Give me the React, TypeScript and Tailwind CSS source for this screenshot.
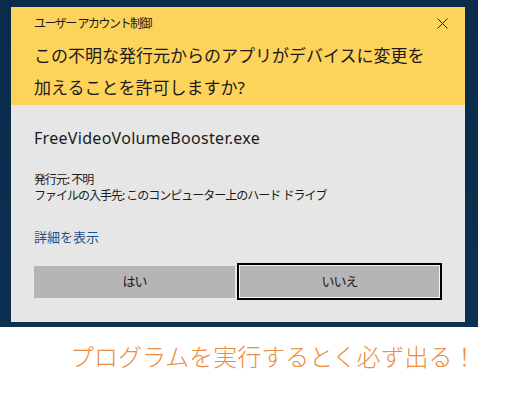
const jp = "font-['Noto_Sans','Noto_Sans_CJK_JP',sans-serif]";

function CloseIcon() {
  return (
    <svg width="11" height="11" viewBox="0 0 11 11" className="block">
      <path d="M0.5 0.5 L10.5 10.5 M10.5 0.5 L0.5 10.5" stroke="#222" strokeWidth="1" fill="none" />
    </svg>
  );
}

export default function App() {
  return (
    <div className={`w-[530px] h-[394px] bg-white overflow-hidden ${jp}`}>
      <div className="w-[478px] h-[327px] bg-gradient-to-b from-[#0a2b4a] to-[#0c3050] pt-[7px] pl-[11px]">
        <div className="w-[454px] h-[315px] flex flex-col bg-[#e6e6e6]">
          <div className="h-[98px] bg-[#fdd35c] px-[23px] pt-[9px] relative">
            <div className="text-[12px] leading-[16px] text-[#1b1b1b] tracking-[-1.5px] whitespace-nowrap">
              ユーザー アカウント制御
            </div>
            <div className="absolute right-[17px] top-[11px]">
              <CloseIcon />
            </div>
            <div className="mt-[8px] text-[17px] leading-[32px] text-[#1b1b1b] whitespace-nowrap">
              <div>この不明な発行元からのアプリがデバイスに変更を</div>
              <div>加えることを許可しますか?</div>
            </div>
          </div>

          <div className="px-[23px] pt-[23px] text-[#1b1b1b]">
            <div className="text-[16px] leading-[20px] tracking-[0.3px]">FreeVideoVolumeBooster.exe</div>
            <div className="mt-[24px] text-[12px] leading-[16px] tracking-[-1px] whitespace-nowrap">
              <div>発行元: 不明</div>
              <div>ファイルの入手先: このコンピューター上のハード ドライブ</div>
            </div>
            <div className="mt-[24px] text-[13px] leading-[18px] text-[#1d4f8c]">
              詳細を表示
            </div>
            <div className="mt-[17px] flex items-center gap-[2px] h-[37px]">
              <div className="w-[201px] h-[32px] bg-[#b5b5b5] flex items-center justify-center text-[13px] tracking-[-1px]">
                はい
              </div>
              <div className="flex-1 h-[37px] border-2 border-black">
                <div className="h-full border border-[#f2f2f2] bg-[#b5b5b5] flex items-center justify-center text-[13px] tracking-[-1px]">
                  いいえ
                </div>
              </div>
            </div>
          </div>
        </div>
      </div>

      <div className="mt-[15px] pl-[70px] text-[24px] leading-[30px] text-[#ec8c3c] font-light whitespace-nowrap">
        プログラムを実行するとく必ず出る！
      </div>
    </div>
  );
}
